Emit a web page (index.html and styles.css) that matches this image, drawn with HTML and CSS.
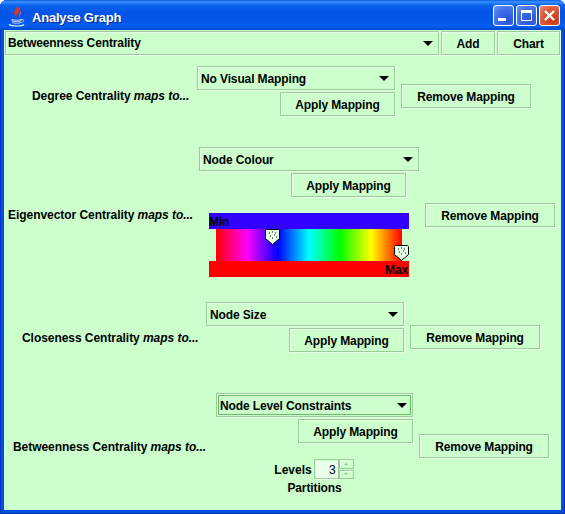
FILE: index.html
```html
<!DOCTYPE html>
<html lang="en">
<head>
  <meta charset="UTF-8">
  <title>Analyse Graph</title>
  <link rel="stylesheet" href="styles.css">
</head>
<body>
  <div class="window">
    <div class="titlebar">
      <svg class="java-icon" width="18" height="23" viewBox="0 0 18 23">
        <path d="M9 1c1.500 3-3.500 5-3 8 .3 2 2 3 3 5-1-3 1-5 2.500-7C12.500 5 11 3 9 1z" fill="#d8382c"/>
        <path d="M12.500 6c.5 2-2 3.500-1.500 5.500l.5 2c0-2 2.500-4 1-7.500z" fill="#e8604c"/>
        <path d="M4 15.500c2 1 7 1 9 0M4 15.500v1.500c2 1 7 1 9 0v-1.500" fill="none" stroke="#c8d8f8"/>
        <path d="M4 18.500c2 1 7 1 9 0" fill="none" stroke="#b0c4f0"/>
        <path d="M13 15.500c3-.5 4 1.500.5 3" fill="none" stroke="#c8d8f8"/>
        <path d="M1 20.500c3 2 13 2 15 0" fill="none" stroke="#e4ecff" stroke-width="1.200"/>
      </svg>
      <span class="title">Analyse Graph</span>
      <div class="win-buttons">
        <div class="win-btn"><svg width="19" height="19" viewBox="0 0 19 19"><rect x="4" y="12" width="8" height="3" fill="#fff"/></svg></div>
        <div class="win-btn"><svg width="19" height="19" viewBox="0 0 19 19"><path d="M4.500 4.500h10v10h-10z" fill="none" stroke="#fff"/><rect x="4" y="4" width="11" height="3" fill="#fff"/></svg></div>
        <div class="win-btn close"><svg width="19" height="19" viewBox="0 0 19 19"><path d="M5 5l9 9M14 5l-9 9" stroke="#fff" stroke-width="2.400"/></svg></div>
      </div>
    </div>

    <div class="content">
      <div class="toolbar">
        <div class="combo combo-main"><span>Betweenness Centrality</span><i class="arrow"></i></div>
        <button class="btn btn-add">Add</button>
        <button class="btn btn-chart">Chart</button>
      </div>

      <div class="mapping mapping-degree">
        <div class="label">Degree Centrality <em>maps to...</em></div>
        <div class="controls">
          <div class="combo"><span>No Visual Mapping</span><i class="arrow"></i></div>
          <button class="btn btn-apply">Apply Mapping</button>
        </div>
        <button class="btn btn-remove">Remove Mapping</button>
      </div>

      <div class="mapping mapping-eigen">
        <div class="label">Eigenvector Centrality <em>maps to...</em></div>
        <div class="controls">
          <div class="combo"><span>Node Colour</span><i class="arrow"></i></div>
          <button class="btn btn-apply">Apply Mapping</button>
          <div class="colour-scale">
            <div class="scale-min">Min</div>
            <div class="scale-band"></div>
            <div class="scale-max">Max</div>
            <svg class="thumb thumb-a" width="15" height="16" viewBox="0 0 15 16"><path d="M1.500.500h12l1 1v8l-7 6-7-6v-8z" fill="#e6ffe6" stroke="#000"/><path d="M4 4h1M7 3h1M10 4h1M5 7h1M9 6h1M11 8h1M7 9h1" stroke="#000"/></svg>
            <svg class="thumb thumb-b" width="15" height="16" viewBox="0 0 15 16"><path d="M1.500.500h12l1 1v8l-7 6-7-6v-8z" fill="#e6ffe6" stroke="#000"/><path d="M4 4h1M7 3h1M10 4h1M5 7h1M9 6h1M11 8h1M7 9h1" stroke="#000"/></svg>
          </div>
        </div>
        <button class="btn btn-remove">Remove Mapping</button>
      </div>

      <div class="mapping mapping-close">
        <div class="label">Closeness Centrality <em>maps to...</em></div>
        <div class="controls">
          <div class="combo"><span>Node Size</span><i class="arrow"></i></div>
          <button class="btn btn-apply">Apply Mapping</button>
        </div>
        <button class="btn btn-remove">Remove Mapping</button>
      </div>

      <div class="mapping mapping-between">
        <div class="label">Betweenness Centrality <em>maps to...</em></div>
        <div class="controls">
          <div class="combo focused"><span>Node Level Constraints</span><i class="arrow"></i></div>
          <button class="btn btn-apply">Apply Mapping</button>
          <div class="levels">
            <span class="levels-text">Levels</span>
            <div class="spinner">
              <div class="spinner-value">3</div>
              <div class="spinner-arrows">
                <div class="spin-btn"><i class="tiny-up"></i></div>
                <div class="spin-btn"><i class="tiny-down"></i></div>
              </div>
            </div>
          </div>
          <div class="partitions">Partitions</div>
        </div>
        <button class="btn btn-remove">Remove Mapping</button>
      </div>
    </div>
  </div>
</body>
</html>
```

FILE: styles.css
```css
* { margin: 0; padding: 0; box-sizing: border-box; }
html, body { height: 100%; background: #fff; overflow: hidden; }
body { font-family: "Liberation Sans", Arial, sans-serif; font-size: 12px; font-weight: bold; color: #000; letter-spacing: -0.12px; }

/* Window frame */
.window {
  width: 565px; height: 514px;
  display: flex; flex-direction: column;
  background: #0350e0;
  box-shadow: inset -1px -1px 0 #0030b0, inset 1px 0 0 #0038c0;
  border-radius: 7px 7px 0 0;
  overflow: hidden;
}
.titlebar {
  height: 30px; flex: none;
  display: flex; align-items: center;
  padding: 0 5px 0 8px;
  background: linear-gradient(to bottom, #0a5ae0 0, #3a93ff 2px, #0b63ee 5px, #0255e6 12px, #0356ea 22px, #0560f2 26px, #0045d0 30px);
}
.java-icon { flex: none; margin: 1px 6px 0 0; }
.title { color: #fff; font-size: 13px; font-weight: bold; letter-spacing: -0.2px; padding-top: 5px; text-shadow: 1px 1px 0 #0a2a90; }
.win-buttons { margin: 1px 0 0 auto; display: flex; gap: 2px; }
.win-btn {
  width: 21px; height: 21px;
  border: 1px solid #fff; border-radius: 3px;
  background: radial-gradient(circle at 70% 75%, #2a50d8 0, #3f6fe8 55%, #6f97f5 100%);
}
.win-btn svg { display: block; }
.win-btn.close { background: radial-gradient(circle at 70% 75%, #c83a18 0, #dc5a38 60%, #ee9078 100%); }

.content {
  flex: 1;
  margin: 0 4px 4px;
  padding: 1px 1px 0;
  background: #ccffcc;
}

/* Metal style widgets */
.btn, .combo {
  height: 24px;
  border: 1px solid #99cc99;
  background: #ccffcc;
  box-shadow: inset 1px 1px 0 #eaffea, 1px 1px 0 #eaffea;
  font: inherit; letter-spacing: inherit; color: #000;
}
.btn { padding-top: 2px; }
.combo {
  display: flex; align-items: center; justify-content: space-between;
  padding: 2px 5px 0 3px;
}
.combo-main { padding: 0 5px 0 2px; }
.combo.focused { outline: 1px solid #66bb66; outline-offset: -3px; }
.arrow {
  width: 0; height: 0; margin-top: -1px;
  border-left: 5px solid transparent; border-right: 5px solid transparent; border-top: 5px solid #000;
}
.combo-main .arrow { margin-top: 0; }

/* Top row */
.toolbar { display: flex; gap: 2px; }
.combo-main { width: 434px; }
.btn-add { width: 54px; }
.btn-chart { width: 63px; }

/* Mapping rows */
.mapping { display: flex; align-items: center; }
.label { white-space: nowrap; width: var(--label-width); margin-top: var(--shift); letter-spacing: -0.05px; }
.label em { font-style: italic; }
.controls { display: flex; flex-direction: column; align-items: flex-end; gap: 2px; width: var(--controls-width); }
.controls .combo { width: 100%; }
.btn-apply { width: 115px; }
.btn-remove { width: 130px; margin-left: 6px; margin-top: var(--btn-shift); }

.mapping-degree { --label-width: 165px; --controls-width: 198px; --shift: 9px; --btn-shift: 9px; margin-top: 11px; padding-left: 27px; }
.mapping-eigen { --label-width: 191px; --controls-width: 220px; --shift: 5px; --btn-shift: 5px; margin-top: 31px; padding-left: 3px; }
.mapping-close { --label-width: 184px; --controls-width: 198px; --shift: 21px; --btn-shift: 19px; margin-top: 25px; padding-left: 17px; }
.mapping-between { --label-width: 203px; --controls-width: 197px; --shift: 6px; --btn-shift: 4px; margin-top: 41px; padding-left: 8px; }

.mapping-eigen .btn-apply { margin-right: 13px; }

/* Colour scale */
.colour-scale {
  position: relative;
  width: 200px; margin: 14px 0 0 10px; align-self: flex-start;
}
.scale-min, .scale-max { height: 16px; line-height: 18px; }
.scale-min { background: #3300ff; line-height: 19px; }
.scale-max { background: #ff0000; text-align: right; padding-right: 1px; }
.scale-band {
  height: 32px; margin: 0 7px;
  background: linear-gradient(to right, #f00, #f0f, #00f, #0ff, #0f0, #ff0, #f00);
}
.thumb { position: absolute; display: block; }
.thumb-a { left: 56px; top: 16px; }
.thumb-b { left: 185px; top: 32px; }

/* Levels spinner */
.levels { align-self: center; display: flex; align-items: center; gap: 2px; margin: 14px 1px 0 0; }
.levels-text { padding-top: 2px; letter-spacing: 0; }
.spinner { display: flex; height: 20px; }
.spinner-value {
  width: 25px; border: 1px solid #99cc99;
  background: #eaffea; box-shadow: inset 1px 1px 0 #ccffcc, 1px 1px 0 #eaffea;
  text-align: right; padding-right: 2px; line-height: 20px; font-weight: normal;
}
.spinner-arrows { width: 15px; display: flex; flex-direction: column; gap: 1px; }
.spin-btn {
  flex: 1; display: flex; align-items: center; justify-content: center;
  border: 1px solid #99cc99; box-shadow: inset 1px 1px 0 #eaffea;
}
.tiny-up, .tiny-down { width: 0; height: 0; border-left: 2px solid transparent; border-right: 2px solid transparent; }
.tiny-up { border-bottom: 2px solid #99bb99; }
.tiny-down { border-top: 2px solid #99bb99; }
.partitions { align-self: center; }
```
